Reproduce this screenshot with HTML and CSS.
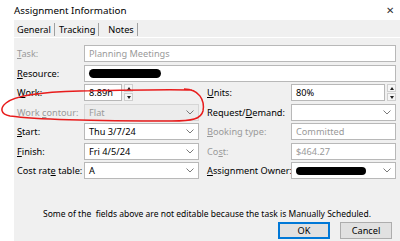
FILE: index.html
```html
<!DOCTYPE html>
<html>
<head>
    <title>Assignment Information</title>
    <link rel="stylesheet" href="styles.css">
</head>
<body>
    <div class="titlebar">
        <span class="title">Assignment Information</span>
        <span class="close">&#x2715;</span>
    </div>
    <div class="dialog">
        <div class="tabs">
            <span class="tab">General</span>
            <span class="tab">Tracking</span>
            <span class="tab">Notes</span>
        </div>

        <div class="form">
            <div class="row">
                <span class="label off"><u>T</u>ask:</span>
                <div class="field wide off">Planning Meetings</div>
            </div>
            <div class="row">
                <span class="label"><u>R</u>esource:</span>
                <div class="field wide"><span class="blot"></span></div>
            </div>
            <div class="row">
                <span class="label"><u>W</u>ork:</span>
                <div class="left">
                    <div class="field short">8.89h</div>
                    <div class="spin"><span class="up"></span><span class="down"></span></div>
                </div>
                <span class="label right"><u>U</u>nits:</span>
                <div class="rightfield">
                    <div class="field grow">80%</div>
                    <div class="spin"><span class="up"></span><span class="down"></span></div>
                </div>
            </div>
            <div class="row">
                <span class="label off">Work <u>c</u>ontour:</span>
                <div class="field select left disabled off">Flat<svg class="chev" width="8" height="5"><polyline points="0.5,0.5 4,4 7.5,0.5" /></svg></div>
                <span class="label right">Request/<u>D</u>emand:</span>
                <div class="field select rightfield"><svg class="chev" width="8" height="5"><polyline points="0.5,0.5 4,4 7.5,0.5" /></svg></div>
            </div>
            <div class="row">
                <span class="label"><u>S</u>tart:</span>
                <div class="field select left">Thu 3/7/24<svg class="chev" width="8" height="5"><polyline points="0.5,0.5 4,4 7.5,0.5" /></svg></div>
                <span class="label right off"><u>B</u>ooking type:</span>
                <div class="field rightfield off">Committed</div>
            </div>
            <div class="row">
                <span class="label"><u>F</u>inish:</span>
                <div class="field select left">Fri 4/5/24<svg class="chev" width="8" height="5"><polyline points="0.5,0.5 4,4 7.5,0.5" /></svg></div>
                <span class="label right off">Co<u>s</u>t:</span>
                <div class="field rightfield off">$464.27</div>
            </div>
            <div class="row">
                <span class="label">Cost rat<u>e</u> table:</span>
                <div class="field select left">A<svg class="chev" width="8" height="5"><polyline points="0.5,0.5 4,4 7.5,0.5" /></svg></div>
                <span class="label right"><u>A</u>ssignment Owner:</span>
                <div class="field select rightfield"><span class="blot owner"></span><svg class="chev" width="8" height="5"><polyline points="0.5,0.5 4,4 7.5,0.5" /></svg></div>
            </div>
        </div>

        <p class="note">Some of the&nbsp; fields above are not editable because the task is Manually Scheduled.</p>

        <div class="buttons">
            <span class="btn ok">OK</span>
            <span class="btn">Cancel</span>
        </div>
    </div>

    <!-- hand drawn mark around the contour row -->
    <svg class="mark" width="400" height="241">
        <path d="M 184 89 C 199 89, 205 100, 203 111 C 201 119, 192 121, 172 121 C 110 121, 40 120, 10 116 C 0 114, 0 108, 6 103 C 14 96, 40 92, 80 91 C 130 90, 168 89, 192 90" />
    </svg>
</body>
</html>
```

FILE: styles.css
```css
body{
    margin:0;
    background-color:#ffffff;
    font-family:"Noto Sans", "Open Sans", sans-serif;
    font-size:9.2px;
    color:#000000;
    width:400px;
    height:241px;
    overflow:hidden;
}
.titlebar{
    height:20px;
    display:flex;
    align-items:center;
    justify-content:space-between;
    padding:0 6px 0 14px;
}
.title{
    font-size:9.8px;
}
.close{
    font-size:10px;
    color:#333333;
}
.dialog{
    margin-left:14px;
    background-color:#f0f0f0;
    height:221px;
    display:flex;
    flex-direction:column;
}
.tabs{
    height:15px;
    margin-top:2px;
    display:flex;
    align-items:center;
    border-bottom:1px solid #ffffff;
    padding-left:2px;
}
.tab{
    padding:0 3px 0 1px;
    margin-right:3px;
    border-right:1px solid #a0a0a0;
    line-height:13px;
}
.tab:nth-child(3){
    padding-left:6px;
}
.form{
    display:flex;
    flex-direction:column;
    gap:2.5px;
    padding:7px 4px 0 3px;
}
.row{
    display:flex;
    align-items:center;
    height:17px;
}
.label{
    width:67px;
    flex:none;
    white-space:nowrap;
}
.label.right{
    width:84px;
    margin-left:8px;
}
.off{
    color:#9a9a9a;
}
.field{
    box-sizing:border-box;
    height:17px;
    background-color:#ffffff;
    border:1px solid #b8b8b8;
    padding:0 4px;
    display:flex;
    align-items:center;
    white-space:nowrap;
}
.wide{
    flex:1;
}
.left{
    width:115px;
    flex:none;
    display:flex;
    align-items:center;
}
.rightfield{
    width:105px;
    flex:none;
    display:flex;
    align-items:center;
}
.field.short{
    width:38px;
}
.field.grow{
    flex:1;
}
.select{
    justify-content:space-between;
}
.disabled{
    background-color:#ececec;
    border-color:#d6d6d6;
}
.chev{
    flex:none;
    margin-left:auto;
}
.chev polyline{
    fill:none;
    stroke:#7a7a7a;
    stroke-width:1;
}
.spin{
    display:flex;
    flex-direction:column;
    gap:1px;
    margin-left:2px;
}
.spin span{
    box-sizing:border-box;
    width:9px;
    height:8px;
    border:1px solid #cfcfcf;
    background-color:#f6f6f6;
    position:relative;
}
.spin .up::after,
.spin .down::after{
    content:"";
    position:absolute;
    left:1.5px;
    border-left:2.5px solid transparent;
    border-right:2.5px solid transparent;
}
.spin .up::after{
    top:1.5px;
    border-bottom:3px solid #222222;
}
.spin .down::after{
    top:2px;
    border-top:3px solid #222222;
}
.blot{
    display:block;
    width:72px;
    height:9px;
    border-radius:5px;
    background-color:#000000;
}
.blot.owner{
    width:70px;
    height:8px;
}
.note{
    margin:29px 0 0 0;
    text-align:center;
    font-size:8.5px;
}
.buttons{
    display:flex;
    justify-content:flex-end;
    gap:10px;
    padding:3px 8px 0 0;
}
.btn{
    box-sizing:border-box;
    width:52px;
    height:17px;
    display:flex;
    align-items:center;
    justify-content:center;
    background-color:#e1e1e1;
    border:1px solid #adadad;
}
.btn.ok{
    border:1px solid #0078d7;
    box-shadow:inset 0 0 0 1px #0078d7;
}
.mark{
    position:absolute;
    left:0;
    top:0;
    pointer-events:none;
}
.mark path{
    fill:none;
    stroke:#e81c1c;
    stroke-width:1.5;
}
```
